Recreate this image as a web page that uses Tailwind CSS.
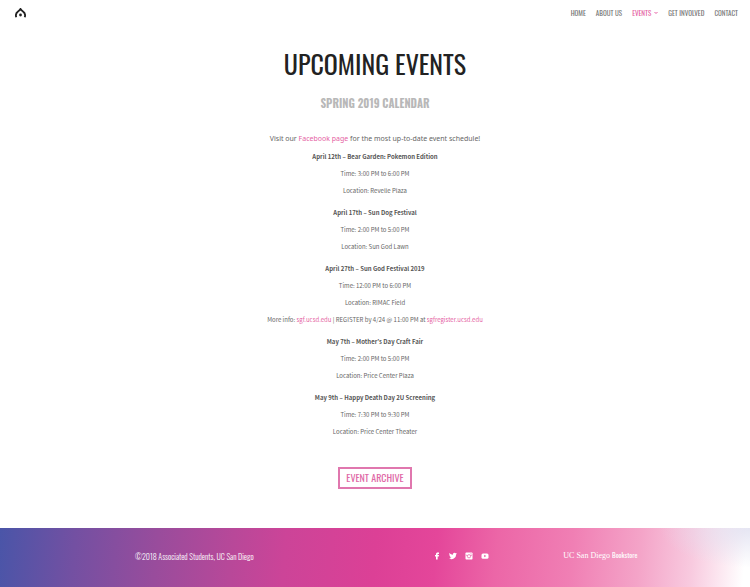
<!DOCTYPE html>
<html lang="en">
<head>
<meta charset="utf-8">
<meta name="viewport" content="width=device-width, initial-scale=1">
<title>Upcoming Events</title>
<script src="https://cdn.jsdelivr.net/npm/@tailwindcss/browser@4"></script>
</head>
<body class="flex min-h-screen flex-col bg-white font-['Noto_Sans_CJK_KR','Noto_Sans',sans-serif] text-[#666] antialiased">
<header class="flex h-[26px] items-center justify-between pl-[15px] pr-3">
  <a href="#" aria-label="Home">
    <svg class="h-[10px] w-[11px]" viewBox="0 0 22 20" fill="none" stroke="#222" stroke-width="3.600">
      <path d="M2.500 18.500C1 14 2.500 9.500 6 7C8.500 5.200 10 4 11 2C12 4 13.500 5.200 16 7C19.500 9.500 21 14 19.500 18.500"/>
      <circle cx="11" cy="14" r="2.800" fill="#222" stroke="none"/>
    </svg>
  </a>
  <nav class="flex items-center gap-[10px] font-['Oswald','Roboto_Condensed','Liberation_Sans_Narrow','Liberation_Sans',sans-serif] text-[7px] leading-[10px] text-[#777]">
    <a href="#">HOME</a>
    <a href="#">ABOUT US</a>
    <a href="#" class="flex items-center gap-[3px] text-[#e55fa3]">EVENTS
      <svg class="h-1 w-1" viewBox="0 0 8 8" fill="none" stroke="currentColor" stroke-width="2"><path d="M1 2l3 3 3-3"/></svg>
    </a>
    <a href="#">GET INVOLVED</a>
    <a href="#">CONTACT</a>
  </nav>
</header>
<main class="flex grow flex-col items-center text-center text-[6px] leading-[17px]">
  <h1 class="mt-[18px] font-['Oswald','Roboto_Condensed','Liberation_Sans_Narrow','Liberation_Sans',sans-serif] text-[26px] leading-10 text-[#222]">UPCOMING EVENTS</h1>
  <h2 class="mt-[10px] font-['Oswald','Roboto_Condensed','Liberation_Sans_Narrow','Liberation_Sans',sans-serif] text-[11px] font-bold leading-[18px] text-[#b8b8b8]">SPRING 2019 CALENDAR</h2>
  <p class="mt-[18px] font-['Noto_Sans',sans-serif] text-[7px]">Visit our <a href="#" class="text-[#e55fa3]">Facebook page</a> for the most up-to-date event schedule!</p>
  <div class="flex flex-col gap-[5px] pt-px">
    <section>
      <h3 class="font-bold text-[#555]">April 12th – Bear Garden: Pokemon Edition</h3>
      <p>Time: 3:00 PM to 6:00 PM</p>
      <p>Location: Revelle Plaza</p>
    </section>
    <section>
      <h3 class="font-bold text-[#555]">April 17th – Sun Dog Festival</h3>
      <p>Time: 2:00 PM to 5:00 PM</p>
      <p>Location: Sun God Lawn</p>
    </section>
    <section>
      <h3 class="font-bold text-[#555]">April 27th – Sun God Festival 2019</h3>
      <p>Time: 12:00 PM to 6:00 PM</p>
      <p>Location: RIMAC Field</p>
      <p>More info: <a href="#" class="text-[#e55fa3]">sgf.ucsd.edu</a> | REGISTER by 4/24 @ 11:00 PM at <a href="#" class="text-[#e55fa3]">sgfregister.ucsd.edu</a></p>
    </section>
    <section>
      <h3 class="font-bold text-[#555]">May 7th – Mother’s Day Craft Fair</h3>
      <p>Time: 2:00 PM to 5:00 PM</p>
      <p>Location: Price Center Plaza</p>
    </section>
    <section>
      <h3 class="font-bold text-[#555]">May 9th – Happy Death Day 2U Screening</h3>
      <p>Time: 7:30 PM to 9:30 PM</p>
      <p>Location: Price Center Theater</p>
    </section>
  </div>
  <a href="#" class="mt-[27px] border-2 border-[#e077ae] px-1.5 font-['Oswald','Roboto_Condensed','Liberation_Sans_Narrow','Liberation_Sans',sans-serif] text-[10px] leading-[18px] text-[#e069a7]">EVENT ARCHIVE</a>
</main>
<footer class="flex h-[59px] items-center bg-[radial-gradient(ellipse_90px_40px_at_top_right,#dfdff0cc,#dfdff000),linear-gradient(95deg,#4a55a8_0%,#7350a2_10%,#994c9c_21%,#b84899_31%,#cc4498_38%,#dc4096_50%,#e4469a_58%,#ec66a7_66%,#f07fb4_76%,#f4a4c8_85%,#f8cadf_92%,#ffffff_99%)] pb-[3px] pl-[18%] pr-[15%] font-['Oswald','Roboto_Condensed','Liberation_Sans_Narrow','Liberation_Sans',sans-serif] text-[8px] text-white">
  <p class="font-light">©2018 Associated Students, UC San Diego</p>
  <div class="ml-auto flex gap-2">
    <a href="#" aria-label="Facebook"><svg class="size-2" viewBox="0 0 16 16" fill="currentColor"><path d="M6 15V9H4V6h2V4.500C6 2 7.300 1 9.500 1H12v3h-1.500C9.500 4 9.300 4.300 9.300 5v1H12l-.4 3H9.300v6z"/></svg></a>
    <a href="#" aria-label="Twitter"><svg class="size-2" viewBox="0 0 24 24" fill="currentColor"><path d="M24 4.600a10 10 0 0 1-2.800.8 5 5 0 0 0 2.200-2.700c-1 .6-2 1-3.100 1.200a4.900 4.900 0 0 0-8.400 4.500C7.700 8.200 4.100 6.200 1.700 3.200a4.900 4.900 0 0 0 1.500 6.600c-.8 0-1.600-.3-2.200-.6v.1a4.900 4.900 0 0 0 3.900 4.800c-.7.200-1.500.2-2.200.1a4.900 4.900 0 0 0 4.600 3.400A9.900 9.900 0 0 1 0 19.500 14 14 0 0 0 21.500 7.100c1-.7 1.800-1.600 2.500-2.500z"/></svg></a>
    <a href="#" aria-label="Instagram"><svg class="size-2" viewBox="0 0 16 16"><rect x="1" y="1" width="14" height="14" rx="1.500" fill="currentColor"/><g fill="none" stroke="#e3509e" stroke-width="1.300"><circle cx="8" cy="8.500" r="3.300"/><path d="M2 6.500h2.500M11.500 6.500H14M11 3.500h2"/></g></svg></a>
    <a href="#" aria-label="YouTube"><svg class="size-2" viewBox="0 0 16 16"><rect x="1" y="3" width="14" height="10.500" rx="3" fill="currentColor"/><path d="M6.500 5.700v5l4-2.500z" fill="#e3509e"/></svg></a>
  </div>
  <a href="#" class="ml-[74px] flex items-baseline gap-0.5"><span class="font-['Liberation_Serif',serif]">UC San Diego</span><span class="text-[7px]">Bookstore</span></a>
</footer>
</body>
</html>
